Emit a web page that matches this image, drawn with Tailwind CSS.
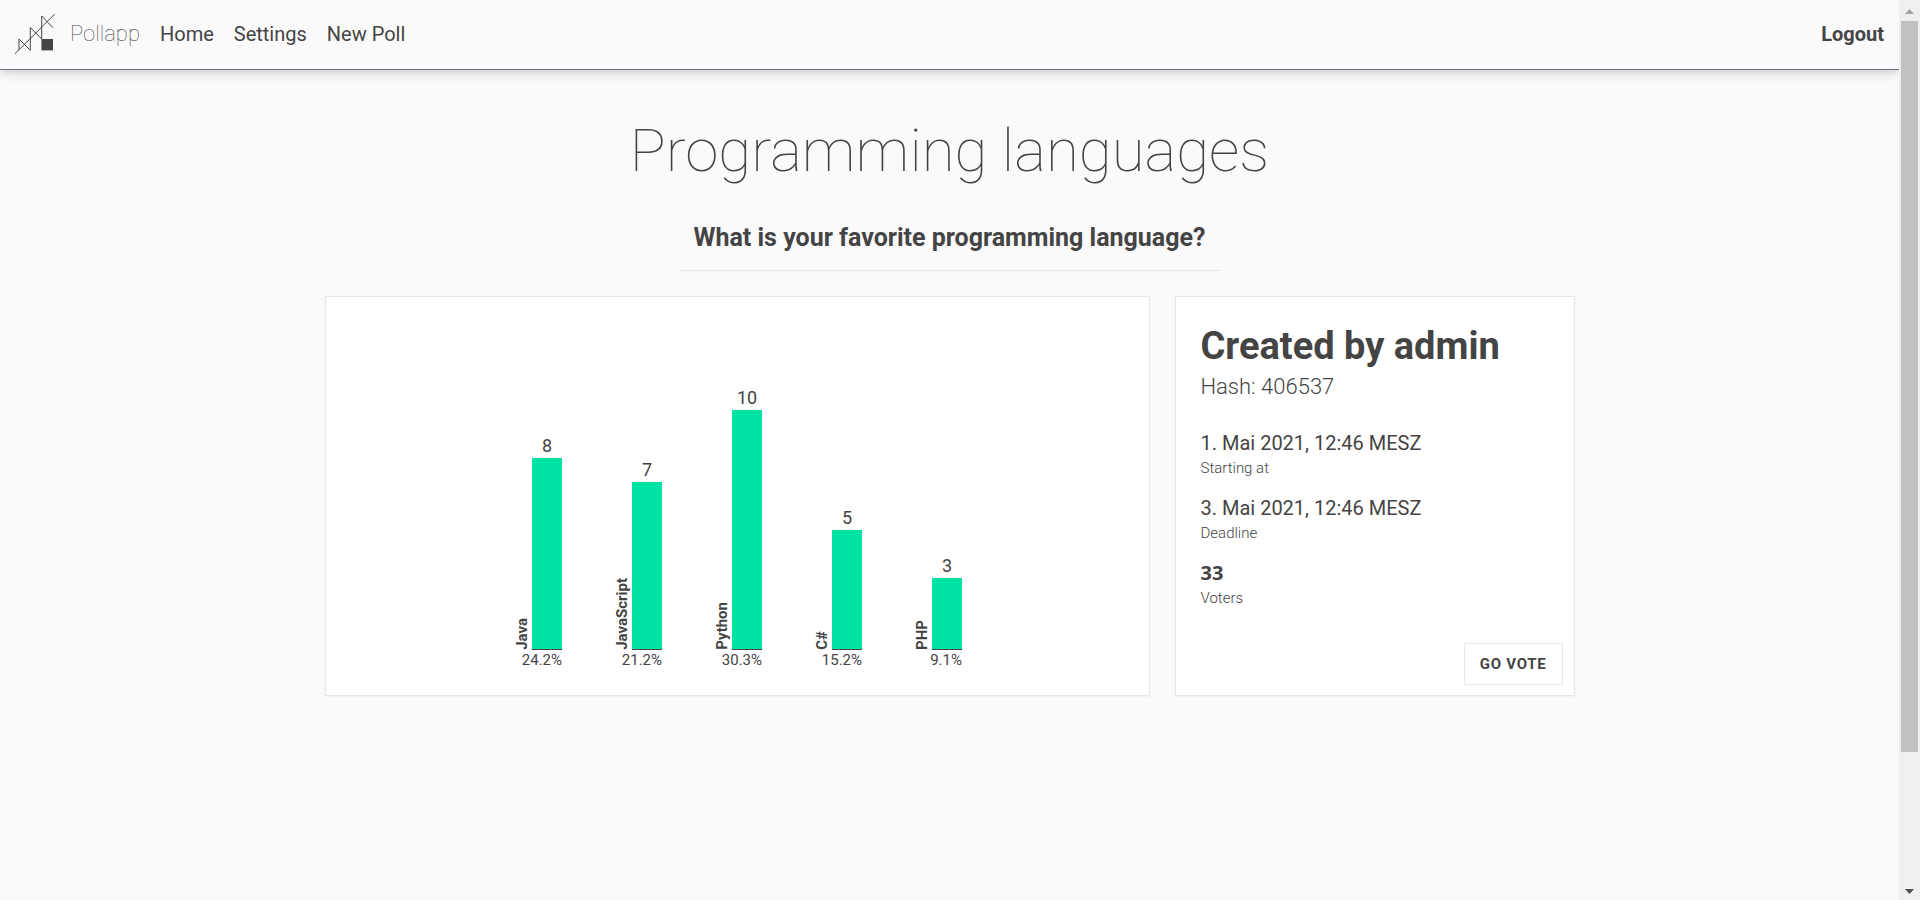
<!DOCTYPE html>
<html lang="en">
<head>
<meta charset="utf-8">
<meta name="viewport" content="width=device-width, initial-scale=1">
<title>Pollapp</title>
<script src="https://cdn.jsdelivr.net/npm/@tailwindcss/browser@4"></script>
</head>
<body class="flex min-h-screen bg-[#fafafa] font-['Roboto',sans-serif] text-[20px] leading-[30px] text-[#444]">
  <div class="min-w-0 flex-1">
    <header class="flex h-[70px] items-center justify-between border-b border-gray-500 px-[15px] pb-0.5 shadow-[0_4px_10px_-1px_rgba(0,0,0,0.16),0_2px_4px_-1px_rgba(0,0,0,0.06)]">
      <nav class="flex items-center gap-5" aria-label="Main">
        <a href="#" class="flex items-center gap-[15px] text-[22px] font-thin">
          <svg class="size-10" viewBox="0 0 40 40" fill="none" stroke="#444" stroke-width="1" aria-hidden="true">
            <path d="M0 39.7 39.8 0"/>
            <path d="M15.3 36.3 4 25V36M15.3 36.3V13.5L26.7 25V2L38 13.7"/>
            <rect x="26.4" y="25" width="11.6" height="11.4" fill="#444" stroke="none"/>
          </svg>
          <span>Pollapp</span>
        </a>
        <a href="#">Home</a>
        <a href="#">Settings</a>
        <a href="#">New Poll</a>
      </nav>
      <a href="#" class="font-bold">Logout</a>
    </header>

    <main class="mx-auto max-w-[1250px] pt-[51px]">
      <div class="flex flex-col items-center text-center">
        <h1 class="text-6xl leading-[60px] font-thin">Programming languages</h1>
        <h2 class="mt-[39px] border-b border-gray-200 px-[15px] pb-[15px] text-[25px] leading-[35px] font-bold">What is your favorite programming language?</h2>
      </div>

      <div class="mt-[25px] flex gap-[25px]">
        <section aria-label="Results" class="flex min-h-[400px] flex-1 items-end justify-center gap-[50px] border border-gray-200 bg-white p-[25px] shadow-[0_1px_2px_rgba(0,0,0,0.05)]">
          <div class="grid w-[50px] grid-cols-[20px_30px] items-end">
            <span class="col-start-2 text-center text-[18px] leading-[25px]">8</span>
            <span class="col-start-1 rotate-180 text-[15px] leading-5 font-bold [writing-mode:vertical-rl]">Java</span>
            <div class="border-b border-[#444] bg-[#00e3a2]" style="height:192px"></div>
            <span class="col-span-2 justify-self-end text-[15px] leading-5">24.2%</span>
          </div>
          <div class="grid w-[50px] grid-cols-[20px_30px] items-end">
            <span class="col-start-2 text-center text-[18px] leading-[25px]">7</span>
            <span class="col-start-1 rotate-180 text-[15px] leading-5 font-bold [writing-mode:vertical-rl]">JavaScript</span>
            <div class="border-b border-[#444] bg-[#00e3a2]" style="height:168px"></div>
            <span class="col-span-2 justify-self-end text-[15px] leading-5">21.2%</span>
          </div>
          <div class="grid w-[50px] grid-cols-[20px_30px] items-end">
            <span class="col-start-2 text-center text-[18px] leading-[25px]">10</span>
            <span class="col-start-1 rotate-180 text-[15px] leading-5 font-bold [writing-mode:vertical-rl]">Python</span>
            <div class="border-b border-[#444] bg-[#00e3a2]" style="height:240px"></div>
            <span class="col-span-2 justify-self-end text-[15px] leading-5">30.3%</span>
          </div>
          <div class="grid w-[50px] grid-cols-[20px_30px] items-end">
            <span class="col-start-2 text-center text-[18px] leading-[25px]">5</span>
            <span class="col-start-1 rotate-180 text-[15px] leading-5 font-bold [writing-mode:vertical-rl]">C#</span>
            <div class="border-b border-[#444] bg-[#00e3a2]" style="height:120px"></div>
            <span class="col-span-2 justify-self-end text-[15px] leading-5">15.2%</span>
          </div>
          <div class="grid w-[50px] grid-cols-[20px_30px] items-end">
            <span class="col-start-2 text-center text-[18px] leading-[25px]">3</span>
            <span class="col-start-1 rotate-180 text-[15px] leading-5 font-bold [writing-mode:vertical-rl]">PHP</span>
            <div class="border-b border-[#444] bg-[#00e3a2]" style="height:72px"></div>
            <span class="col-span-2 justify-self-end text-[15px] leading-5">9.1%</span>
          </div>
        </section>

        <section aria-label="Poll details" class="flex w-[400px] flex-col border border-gray-200 bg-white shadow-[0_1px_2px_rgba(0,0,0,0.05)]">
          <div class="px-[25px] pt-[27px]">
            <h3 class="text-[38px] leading-[45px] font-bold">Created by admin</h3>
            <p class="text-[22px] leading-[35px] font-light">Hash: 406537</p>
            <dl class="mt-6 flex flex-col gap-[15px]">
              <div class="flex flex-col-reverse">
                <dt class="text-[15px] leading-5 font-light">Starting at</dt>
                <dd>1. Mai 2021, 12:46 MESZ</dd>
              </div>
              <div class="flex flex-col-reverse">
                <dt class="text-[15px] leading-5 font-light">Deadline</dt>
                <dd>3. Mai 2021, 12:46 MESZ</dd>
              </div>
              <div class="flex flex-col-reverse">
                <dt class="text-[15px] leading-5 font-light">Voters</dt>
                <dd class="font-['Open_Sans',sans-serif] font-bold">33</dd>
              </div>
            </dl>
          </div>
          <div class="mt-auto flex justify-end px-[11px] pb-[10px]">
            <button type="button" class="border border-gray-200 px-[15px] py-[10px] text-[15px] leading-5 font-bold tracking-wider uppercase">Go vote</button>
          </div>
        </section>
      </div>
    </main>
  </div>

  <!-- Scroll track -->
  <div class="sticky top-0 flex h-screen w-[21px] flex-col items-center bg-[#f0f0f0] pt-[9px] pb-[6px]" aria-hidden="true">
    <svg class="h-[5px] w-[9px]" viewBox="0 0 9 5" fill="#a3a3a3"><path d="M0 5 4.5 0 9 5z"/></svg>
    <div class="mt-[7px] h-[731px] w-[17px] bg-[#c1c1c1]"></div>
    <svg class="mt-auto h-[5px] w-[9px]" viewBox="0 0 9 5" fill="#505050"><path d="M0 0h9L4.5 5z"/></svg>
  </div>
</body>
</html>
